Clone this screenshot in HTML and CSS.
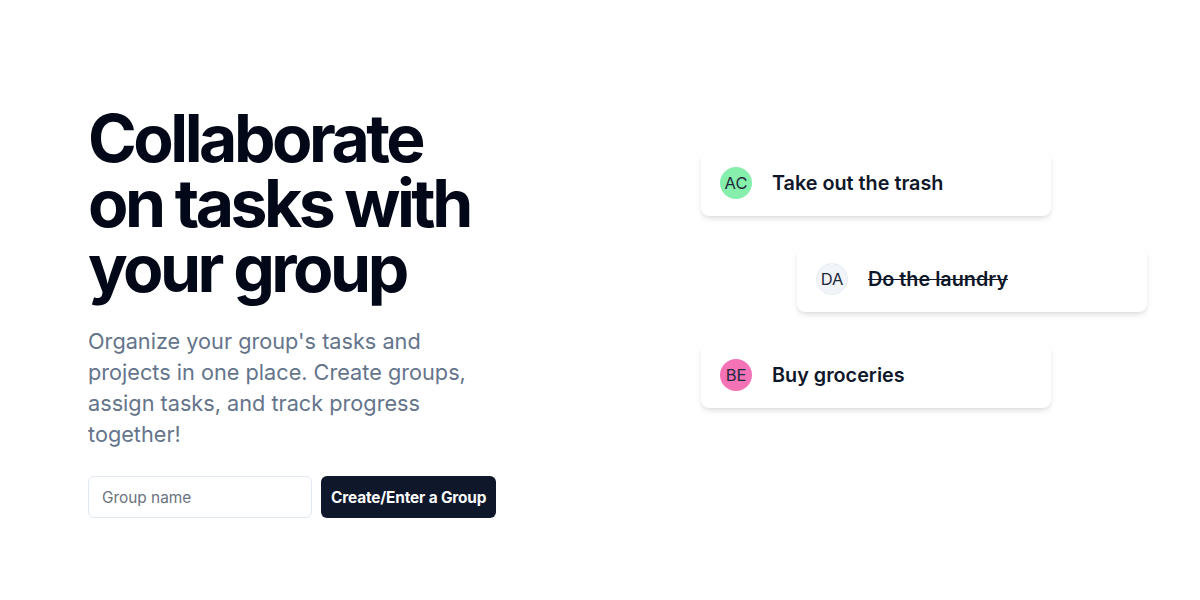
FILE: index.html
```html
<!DOCTYPE html>
<html lang="en">
<head>
<meta charset="utf-8">
<title>Collaborate on tasks</title>
<link rel="stylesheet" href="styles.css">
</head>
<body>
<main class="hero">
  <section class="intro">
    <h1 class="title">Collaborate on tasks with your group</h1>
    <p class="lead">Organize your group's tasks and projects in one place. Create groups, assign tasks, and track progress together!</p>
    <form class="join">
      <input class="join-input" type="text" placeholder="Group name">
      <button class="join-btn" type="button">Create/Enter a Group</button>
    </form>
  </section>
  <section class="tasks">
    <div class="card">
      <span class="avatar avatar-green">AC</span>
      <span class="task">Take out the trash</span>
    </div>
    <div class="card card-shift">
      <span class="avatar avatar-slate">DA</span>
      <span class="task task-done">Do the laundry</span>
    </div>
    <div class="card">
      <span class="avatar avatar-pink">BE</span>
      <span class="task">Buy groceries</span>
    </div>
  </section>
</main>
</body>
</html>
```

FILE: styles.css
```css
* { box-sizing: border-box; }
html, body { margin: 0; padding: 0; background: #ffffff; }
body {
  font-family: Inter, "Noto Sans", "Liberation Sans", sans-serif;
  color: #020817;
  width: 1200px;
  height: 600px;
  overflow: hidden;
}
.hero {
  display: flex;
  align-items: flex-start;
  padding: 106px 0 0 88px;
}
.intro {
  width: 420px;
  display: flex;
  flex-direction: column;
}
.title {
  margin: 0;
  font-size: 66px;
  line-height: 65px;
  font-weight: 700;
  letter-spacing: -0.053em;
  color: #020817;
}
.lead {
  margin: 25px 0 0;
  font-size: 21.7px;
  line-height: 31px;
  color: #64748b;
  width: 400px;
}
.join {
  display: flex;
  gap: 9px;
  margin-top: 26px;
}
.join-input {
  width: 224px;
  height: 42px;
  border: 1px solid #e2e8f0;
  border-radius: 6px;
  padding: 0 13px;
  font-family: inherit;
  font-size: 15.4px;
  color: #020817;
  background: #fff;
  outline: none;
}
.join-input::placeholder { color: #6b7280; }
.join-btn {
  height: 42px;
  padding: 0 10px;
  border: none;
  border-radius: 6px;
  background: #0f172a;
  color: #f8fafc;
  font-family: inherit;
  font-size: 15.4px;
  font-weight: 700;
  letter-spacing: -0.01em;
}
.tasks {
  margin-left: 193px;
  margin-top: 44px;
  display: flex;
  flex-direction: column;
  gap: 30px;
  width: 446px;
}
.card {
  width: 350px;
  height: 66px;
  display: flex;
  align-items: center;
  gap: 20px;
  padding: 0 19px;
  background: #fff;
  border-radius: 8px;
  box-shadow: 0 4px 6px -1px rgba(0,0,0,0.1), 0 2px 4px -2px rgba(0,0,0,0.08), 0 0 1px rgba(0,0,0,0.04);
}
.card-shift { margin-left: 96px; }
.avatar {
  width: 32px;
  height: 32px;
  border-radius: 50%;
  display: flex;
  align-items: center;
  justify-content: center;
  font-size: 16.5px;
  color: #1e293b;
  flex-shrink: 0;
}
.avatar-green { background: #86efac; }
.avatar-slate { background: #f1f5f9; border: 1px solid #e8edf3; }
.avatar-pink { background: #f472b6; }
.task {
  font-size: 19.8px;
  font-weight: 600;
  color: #0f172a;
}
.task-done { text-decoration: line-through; }
```
